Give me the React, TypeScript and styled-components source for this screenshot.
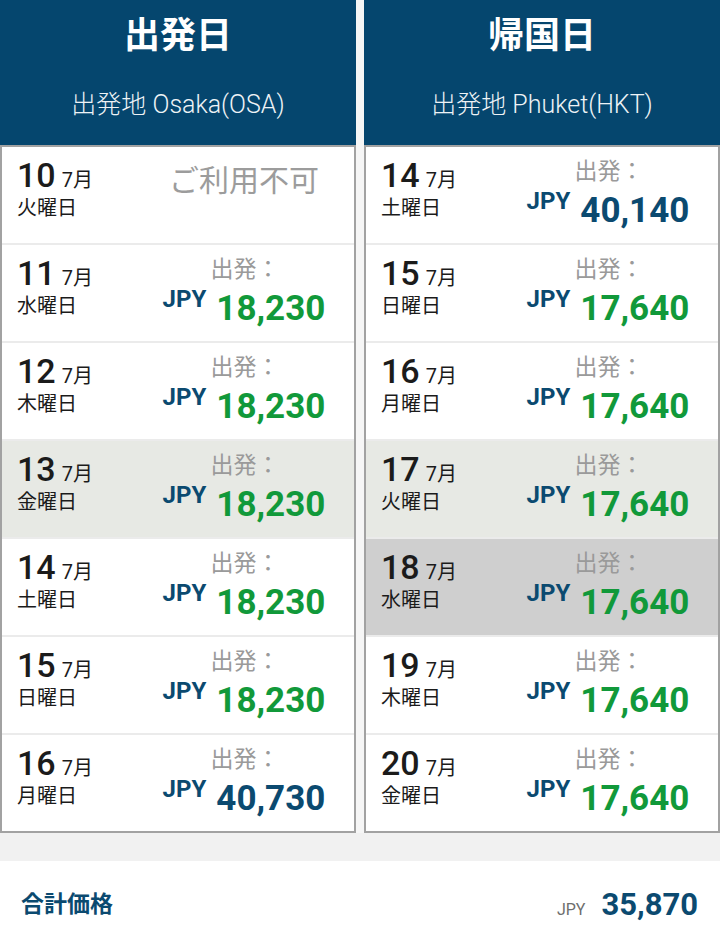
import styled, { createGlobalStyle } from "styled-components";

const GlobalStyle = createGlobalStyle`
  html, body {
    margin: 0;
    padding: 0;
    background: #f1f1f1;
  }
  body {
    font-family: "Roboto", "Noto Sans CJK JP", sans-serif;
    color: #1e1e1e;
  }
`;

type Day = {
  day: number;
  weekday: string;
  price?: string;
  tone?: "green" | "blue";
  state?: "hover" | "selected";
};

type Column = {
  title: string;
  origin: string;
  days: Day[];
};

const columns: Column[] = [
  {
    title: "出発日",
    origin: "出発地 Osaka(OSA)",
    days: [
      { day: 10, weekday: "火曜日" },
      { day: 11, weekday: "水曜日", price: "18,230", tone: "green" },
      { day: 12, weekday: "木曜日", price: "18,230", tone: "green" },
      { day: 13, weekday: "金曜日", price: "18,230", tone: "green", state: "hover" },
      { day: 14, weekday: "土曜日", price: "18,230", tone: "green" },
      { day: 15, weekday: "日曜日", price: "18,230", tone: "green" },
      { day: 16, weekday: "月曜日", price: "40,730", tone: "blue" },
    ],
  },
  {
    title: "帰国日",
    origin: "出発地 Phuket(HKT)",
    days: [
      { day: 14, weekday: "土曜日", price: "40,140", tone: "blue" },
      { day: 15, weekday: "日曜日", price: "17,640", tone: "green" },
      { day: 16, weekday: "月曜日", price: "17,640", tone: "green" },
      { day: 17, weekday: "火曜日", price: "17,640", tone: "green", state: "hover" },
      { day: 18, weekday: "水曜日", price: "17,640", tone: "green", state: "selected" },
      { day: 19, weekday: "木曜日", price: "17,640", tone: "green" },
      { day: 20, weekday: "金曜日", price: "17,640", tone: "green" },
    ],
  },
];

export default function App() {
  return (
    <>
      <GlobalStyle />
      <Page>
        <Columns>
          {columns.map((col) => (
            <DateColumn key={col.title}>
              <Header>
                <Title>{col.title}</Title>
                <Origin>{col.origin}</Origin>
              </Header>
              <List>
                {col.days.map((d) => (
                  <Row key={d.day} $state={d.state}>
                    <DateBlock>
                      <DateLine>
                        <DayNum>{d.day}</DayNum>
                        <Month>7月</Month>
                      </DateLine>
                      <Weekday>{d.weekday}</Weekday>
                    </DateBlock>
                    <PriceBlock>
                      {d.price ? (
                        <>
                          <Label>出発：</Label>
                          <PriceLine>
                            <Currency>JPY</Currency>
                            <Amount $tone={d.tone}>{d.price}</Amount>
                          </PriceLine>
                        </>
                      ) : (
                        <Unavailable>ご利用不可</Unavailable>
                      )}
                    </PriceBlock>
                  </Row>
                ))}
              </List>
            </DateColumn>
          ))}
        </Columns>
        <Footer>
          <TotalLabel>合計価格</TotalLabel>
          <Total>
            <TotalCurrency>JPY</TotalCurrency>
            <TotalAmount>35,870</TotalAmount>
          </Total>
        </Footer>
      </Page>
    </>
  );
}

const Page = styled.div`
  width: 720px;
  min-height: 930px;
  display: flex;
  flex-direction: column;
  background: #f1f1f1;
`;

const Columns = styled.div`
  display: grid;
  grid-template-columns: 356px 356px;
  gap: 8px;
  background: #f6f6f6;
`;

const DateColumn = styled.div`
  display: flex;
  flex-direction: column;
`;

const Header = styled.div`
  height: 145px;
  background: #05466e;
  color: #ffffff;
  display: flex;
  flex-direction: column;
  align-items: center;
  box-sizing: border-box;
  padding-top: 14px;
`;

const Title = styled.div`
  font-size: 36px;
  font-weight: 700;
  line-height: 44px;
`;

const Origin = styled.div`
  margin-top: 31px;
  font-size: 25px;
  font-weight: 300;
  line-height: 32px;
  color: #eef3f6;
`;

const List = styled.div`
  border: 2px solid #a2a2a2;
  background: #ffffff;
  display: flex;
  flex-direction: column;
`;

const Row = styled.div<{ $state?: "hover" | "selected" }>`
  height: 98px;
  box-sizing: border-box;
  display: flex;
  justify-content: space-between;
  align-items: flex-start;
  padding: 0 27px 0 15px;
  background: ${({ $state }) =>
    $state === "selected" ? "#cfcfcf" : $state === "hover" ? "#e7e9e4" : "#ffffff"};
  border-bottom: 2px solid #ebebeb;
  &:last-child {
    height: 96px;
    border-bottom: none;
  }
`;

const DateBlock = styled.div`
  display: flex;
  flex-direction: column;
  padding-top: 8px;
`;

const DateLine = styled.div`
  display: flex;
  align-items: baseline;
  gap: 6px;
`;

const DayNum = styled.span`
  font-size: 34px;
  font-weight: 500;
  line-height: 40px;
  color: #1b1b1b;
`;

const Month = styled.span`
  font-size: 20px;
  color: #1b1b1b;
`;

const Weekday = styled.div`
  font-size: 20px;
  line-height: 26px;
  color: #1b1b1b;
`;

const PriceBlock = styled.div`
  width: 166px;
  display: flex;
  flex-direction: column;
  align-items: center;
  padding-top: 11px;
`;

const Label = styled.div`
  font-size: 23px;
  line-height: 28px;
  color: #9a9a9a;
  padding-left: 2px;
`;

const PriceLine = styled.div`
  display: flex;
  align-items: flex-start;
  gap: 10px;
`;

const Currency = styled.span`
  font-size: 24px;
  font-weight: 700;
  line-height: 30px;
  color: #0b4a70;
`;

const Amount = styled.span<{ $tone?: "green" | "blue" }>`
  font-size: 35px;
  font-weight: 700;
  line-height: 40px;
  margin-top: 5px;
  color: ${({ $tone }) => ($tone === "blue" ? "#0b4a70" : "#11993a")};
`;

const Unavailable = styled.div`
  font-size: 30px;
  line-height: 36px;
  margin-top: 5px;
  color: #9c9c9c;
`;

const Footer = styled.div`
  margin-top: 28px;
  background: #ffffff;
  flex: 1;
  display: flex;
  justify-content: space-between;
  align-items: flex-start;
  padding: 27px 22px 0 21px;
  box-sizing: border-box;
`;

const TotalLabel = styled.div`
  font-size: 23px;
  font-weight: 700;
  line-height: 34px;
  color: #0b4a70;
`;

const Total = styled.div`
  display: flex;
  align-items: baseline;
  gap: 16px;
  line-height: 34px;
`;

const TotalCurrency = styled.span`
  font-size: 16px;
  color: #6e6e6e;
`;

const TotalAmount = styled.span`
  font-size: 31px;
  font-weight: 700;
  color: #0b4a70;
`;
